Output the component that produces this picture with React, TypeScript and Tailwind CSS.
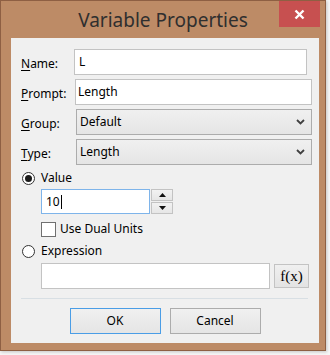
import { ReactNode } from "react";

const font = { fontFamily: '"Noto Sans", "Open Sans", sans-serif' };

function Label({ first, rest }: { first: string; rest: string }) {
  return (
    <span className="text-[12px] text-black">
      <span className="underline underline-offset-[2px]">{first}</span>
      {rest}
    </span>
  );
}

function Chevron() {
  return (
    <svg width="9" height="6" viewBox="0 0 9 6" className="shrink-0">
      <path d="M1 1 L4.5 4.5 L8 1" fill="none" stroke="#404040" strokeWidth="1.8" />
    </svg>
  );
}

function Select({ value }: { value: string }) {
  return (
    <div className="flex h-[26px] flex-1 items-center justify-between border border-[#acacac] bg-gradient-to-b from-[#f0f0f0] to-[#e5e5e5] pl-[3px] pr-[6px] text-[12px] text-black">
      <span>{value}</span>
      <Chevron />
    </div>
  );
}

function Radio({ checked, children }: { checked?: boolean; children: ReactNode }) {
  return (
    <div className="flex items-center gap-[6px] pl-[11px] text-[12px] text-black">
      <span className="flex h-[13px] w-[13px] items-center justify-center rounded-full border border-[#333] bg-white">
        {checked && <span className="h-[7px] w-[7px] rounded-full bg-[#1a1a1a]" />}
      </span>
      <span>{children}</span>
    </div>
  );
}

function Button({ children, focused }: { children: ReactNode; focused?: boolean }) {
  return (
    <div
      className={
        "flex h-[26px] w-[91px] items-center justify-center border bg-gradient-to-b from-[#f0f0f0] to-[#e5e5e5] text-[12px] text-black " +
        (focused ? "border-[#4a9de6]" : "border-[#acacac]")
      }
    >
      {children}
    </div>
  );
}

export default function App() {
  return (
    <div className="h-[355px] w-[330px] bg-[#f6f6f6]" style={font}>
      <div className="flex h-[351px] w-[326px] flex-col border border-[#8e5f43] bg-[#bd8b66] shadow-[1px_1px_3px_rgba(0,0,0,0.2)]">
        {/* title bar */}
        <div className="grid h-[37px] grid-cols-[1fr_auto_1fr] items-start">
          <div />
          <div className="pt-[6px] text-[19px] leading-[26px] text-[#2f2f2f]">Variable Properties</div>
          <div className="flex justify-end pr-[5px]">
            <div className="flex h-[26px] w-[41px] items-center justify-center bg-[#c75050]">
              <svg width="11" height="11" viewBox="0 0 11 11">
                <path d="M1.5 1.5 L9.5 9.5 M9.5 1.5 L1.5 9.5" stroke="white" strokeWidth="2.4" />
              </svg>
            </div>
          </div>
        </div>

        {/* client area */}
        <div className="mb-[7px] ml-[10px] mr-[6px] flex flex-1 flex-col bg-[#f0f0f0] pl-[10px] pr-[7px] pt-[11px]">
          <div className="flex flex-col gap-[4px]">
            <div className="flex items-center">
              <div className="w-[53px]">
                <Label first="N" rest="ame:" />
              </div>
              <div className="mr-[5px] flex h-[26px] flex-1 items-center border border-[#c3c3c3] bg-white pl-[4px] text-[12px] text-black">
                L
              </div>
            </div>
            <div className="flex items-center">
              <div className="w-[54px]">
                <Label first="P" rest="rompt:" />
              </div>
              <div className="flex h-[26px] flex-1 items-center border border-[#c3c3c3] bg-white pl-[2px] text-[12px] text-black">
                Length
              </div>
            </div>
            <div className="flex items-center">
              <div className="w-[55px]">
                <Label first="G" rest="roup:" />
              </div>
              <Select value="Default" />
            </div>
            <div className="flex items-center">
              <div className="w-[55px]">
                <Label first="T" rest="ype:" />
              </div>
              <Select value="Length" />
            </div>
          </div>

          <div className="ml-[-10px] mt-[4px]">
            <Radio checked>Value</Radio>
          </div>
          <div className="mt-[2px] flex items-stretch pl-[20px]">
            <div className="flex h-[25px] w-[109px] items-center border border-[#7eb4ea] bg-white pl-[4px] text-[12px] text-black">
              10
              <span className="ml-[1px] h-[14px] w-[1px] bg-black" />
            </div>
            <div className="ml-[1px] flex w-[22px] flex-col gap-[1px]">
              <div className="flex h-[12px] items-center justify-center border border-[#c3c3c3] bg-gradient-to-b from-[#f2f2f2] to-[#e6e6e6]">
                <svg width="7" height="4" viewBox="0 0 7 4">
                  <path d="M0 4 L3.5 0 L7 4 Z" fill="#111" />
                </svg>
              </div>
              <div className="flex h-[12px] items-center justify-center border border-[#c3c3c3] bg-gradient-to-b from-[#f2f2f2] to-[#e6e6e6]">
                <svg width="7" height="4" viewBox="0 0 7 4">
                  <path d="M0 0 L3.5 4 L7 0 Z" fill="#111" />
                </svg>
              </div>
            </div>
          </div>
          <div className="mt-[6px] flex items-center gap-[4px] pl-[20px] text-[12px] text-black">
            <span className="h-[15px] w-[15px] border border-[#707070] bg-white" />
            <span>Use Dual Units</span>
          </div>
          <div className="ml-[-10px] mt-[4px]">
            <Radio>Expression</Radio>
          </div>
          <div className="mt-[3px] flex items-center pl-[20px]">
            <div className="h-[26px] w-[229px] border border-[#c3c3c3] bg-white" />
            <div className="ml-[4px] flex h-[24px] w-[35px] items-center justify-center border border-[#c3c3c3] bg-gradient-to-b from-[#f0f0f0] to-[#e3e3e3] text-[15px] text-black" style={{ fontFamily: '"Liberation Serif", serif' }}>
              f(x)
            </div>
          </div>

          <div className="mt-[9px] h-px w-[287px] bg-[#d8dfe4]" />

          <div className="mt-[9px] flex justify-center gap-[9px] pr-[3px]">
            <Button focused>OK</Button>
            <Button>Cancel</Button>
          </div>
        </div>
      </div>
    </div>
  );
}
